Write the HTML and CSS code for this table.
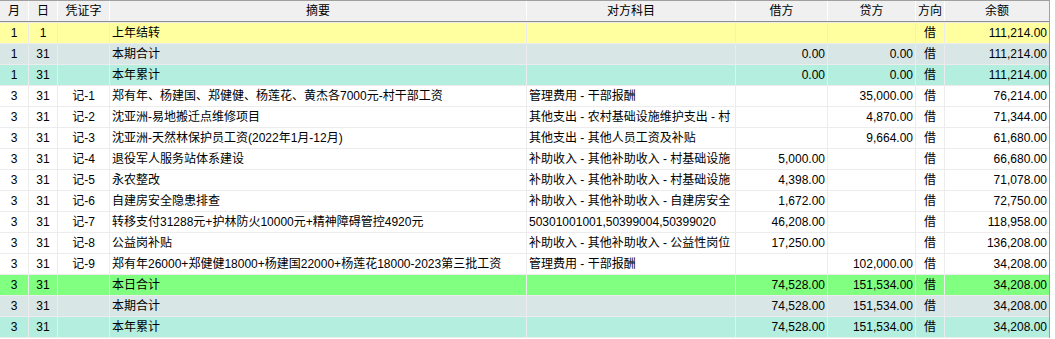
FILE: index.html
```html
<!DOCTYPE html>
<html lang="zh-CN">
<head>
<meta charset="utf-8">
<title>明细账</title>
<link rel="stylesheet" href="styles.css">
</head>
<body>
<div class="ledger">
  <div class="row head">
    <div class="c">月</div><div class="c">日</div><div class="c">凭证字</div><div class="c">摘要</div><div class="c">对方科目</div><div class="c">借方</div><div class="c">贷方</div><div class="c">方向</div><div class="c">余额</div>
  </div>
  <div class="body">
    <div class="row yellow">
      <div class="c">1</div><div class="c">1</div><div class="c"></div><div class="l">上年结转</div><div class="l"></div><div class="r"></div><div class="r"></div><div class="c">借</div><div class="r">111,214.00</div>
    </div>
    <div class="row period">
      <div class="c">1</div><div class="c">31</div><div class="c"></div><div class="l">本期合计</div><div class="l"></div><div class="r">0.00</div><div class="r">0.00</div><div class="c">借</div><div class="r">111,214.00</div>
    </div>
    <div class="row year">
      <div class="c">1</div><div class="c">31</div><div class="c"></div><div class="l">本年累计</div><div class="l"></div><div class="r">0.00</div><div class="r">0.00</div><div class="c">借</div><div class="r">111,214.00</div>
    </div>
    <div class="row">
      <div class="c">3</div><div class="c">31</div><div class="c">记-1</div><div class="l">郑有年、杨建国、郑健健、杨莲花、黄杰各7000元-村干部工资</div><div class="l">管理费用 - 干部报酬</div><div class="r"></div><div class="r">35,000.00</div><div class="c">借</div><div class="r">76,214.00</div>
    </div>
    <div class="row">
      <div class="c">3</div><div class="c">31</div><div class="c">记-2</div><div class="l">沈亚洲-易地搬迁点维修项目</div><div class="l">其他支出 - 农村基础设施维护支出 - 村</div><div class="r"></div><div class="r">4,870.00</div><div class="c">借</div><div class="r">71,344.00</div>
    </div>
    <div class="row">
      <div class="c">3</div><div class="c">31</div><div class="c">记-3</div><div class="l">沈亚洲-天然林保护员工资(2022年1月-12月)</div><div class="l">其他支出 - 其他人员工资及补贴</div><div class="r"></div><div class="r">9,664.00</div><div class="c">借</div><div class="r">61,680.00</div>
    </div>
    <div class="row">
      <div class="c">3</div><div class="c">31</div><div class="c">记-4</div><div class="l">退役军人服务站体系建设</div><div class="l">补助收入 - 其他补助收入 - 村基础设施</div><div class="r">5,000.00</div><div class="r"></div><div class="c">借</div><div class="r">66,680.00</div>
    </div>
    <div class="row">
      <div class="c">3</div><div class="c">31</div><div class="c">记-5</div><div class="l">永农整改</div><div class="l">补助收入 - 其他补助收入 - 村基础设施</div><div class="r">4,398.00</div><div class="r"></div><div class="c">借</div><div class="r">71,078.00</div>
    </div>
    <div class="row">
      <div class="c">3</div><div class="c">31</div><div class="c">记-6</div><div class="l">自建房安全隐患排查</div><div class="l">补助收入 - 其他补助收入 - 自建房安全</div><div class="r">1,672.00</div><div class="r"></div><div class="c">借</div><div class="r">72,750.00</div>
    </div>
    <div class="row">
      <div class="c">3</div><div class="c">31</div><div class="c">记-7</div><div class="l">转移支付31288元+护林防火10000元+精神障碍管控4920元</div><div class="l">50301001001,50399004,50399020</div><div class="r">46,208.00</div><div class="r"></div><div class="c">借</div><div class="r">118,958.00</div>
    </div>
    <div class="row">
      <div class="c">3</div><div class="c">31</div><div class="c">记-8</div><div class="l">公益岗补贴</div><div class="l">补助收入 - 其他补助收入 - 公益性岗位</div><div class="r">17,250.00</div><div class="r"></div><div class="c">借</div><div class="r">136,208.00</div>
    </div>
    <div class="row">
      <div class="c">3</div><div class="c">31</div><div class="c">记-9</div><div class="l">郑有年26000+郑健健18000+杨建国22000+杨莲花18000-2023第三批工资</div><div class="l">管理费用 - 干部报酬</div><div class="r"></div><div class="r">102,000.00</div><div class="c">借</div><div class="r">34,208.00</div>
    </div>
    <div class="row day">
      <div class="c">3</div><div class="c">31</div><div class="c"></div><div class="l">本日合计</div><div class="l"></div><div class="r">74,528.00</div><div class="r">151,534.00</div><div class="c">借</div><div class="r">34,208.00</div>
    </div>
    <div class="row period">
      <div class="c">3</div><div class="c">31</div><div class="c"></div><div class="l">本期合计</div><div class="l"></div><div class="r">74,528.00</div><div class="r">151,534.00</div><div class="c">借</div><div class="r">34,208.00</div>
    </div>
    <div class="row year">
      <div class="c">3</div><div class="c">31</div><div class="c"></div><div class="l">本年累计</div><div class="l"></div><div class="r">74,528.00</div><div class="r">151,534.00</div><div class="c">借</div><div class="r">34,208.00</div>
    </div>
  </div>
</div>
</body>
</html>
```
FILE: styles.css
```css
html, body {
  margin: 0;
  padding: 0;
  background: #ffffff;
}

body {
  font-family: "Liberation Sans", "Noto Sans CJK SC", sans-serif;
  font-size: 12px;
  color: #000000;
}

.ledger {
  width: 1049px;
  border-right: 1px solid #a0a0a0;
}

.row {
  display: grid;
  grid-template-columns: 28px 28px 51px 416px 208px 91px 87px 28px 104px;
  column-gap: 1px;
  background: #ececec;
}

.row > div {
  height: 20px;
  line-height: 20px;
  padding: 0 2px;
  white-space: nowrap;
  overflow: hidden;
  background: #ffffff;
}

.row > .c { text-align: center; padding: 0; }
.row > .l { text-align: left; }
.row > .r { text-align: right; }

.head {
  background: #ffffff;
  border-top: 1px solid #a0a0a0;
  border-bottom: 1px solid #8c8c8c;
}

.head > div {
  background: #f0f0f0;
}

.body {
  display: flex;
  flex-direction: column;
  gap: 1px;
  padding: 1px 0;
  background: #ececec;
}

.yellow > div { background: #ffffa0; }
.period > div { background: #d9e6e6; }
.year > div { background: #b3eedf; }
.day > div { background: #80ff80; }
```
